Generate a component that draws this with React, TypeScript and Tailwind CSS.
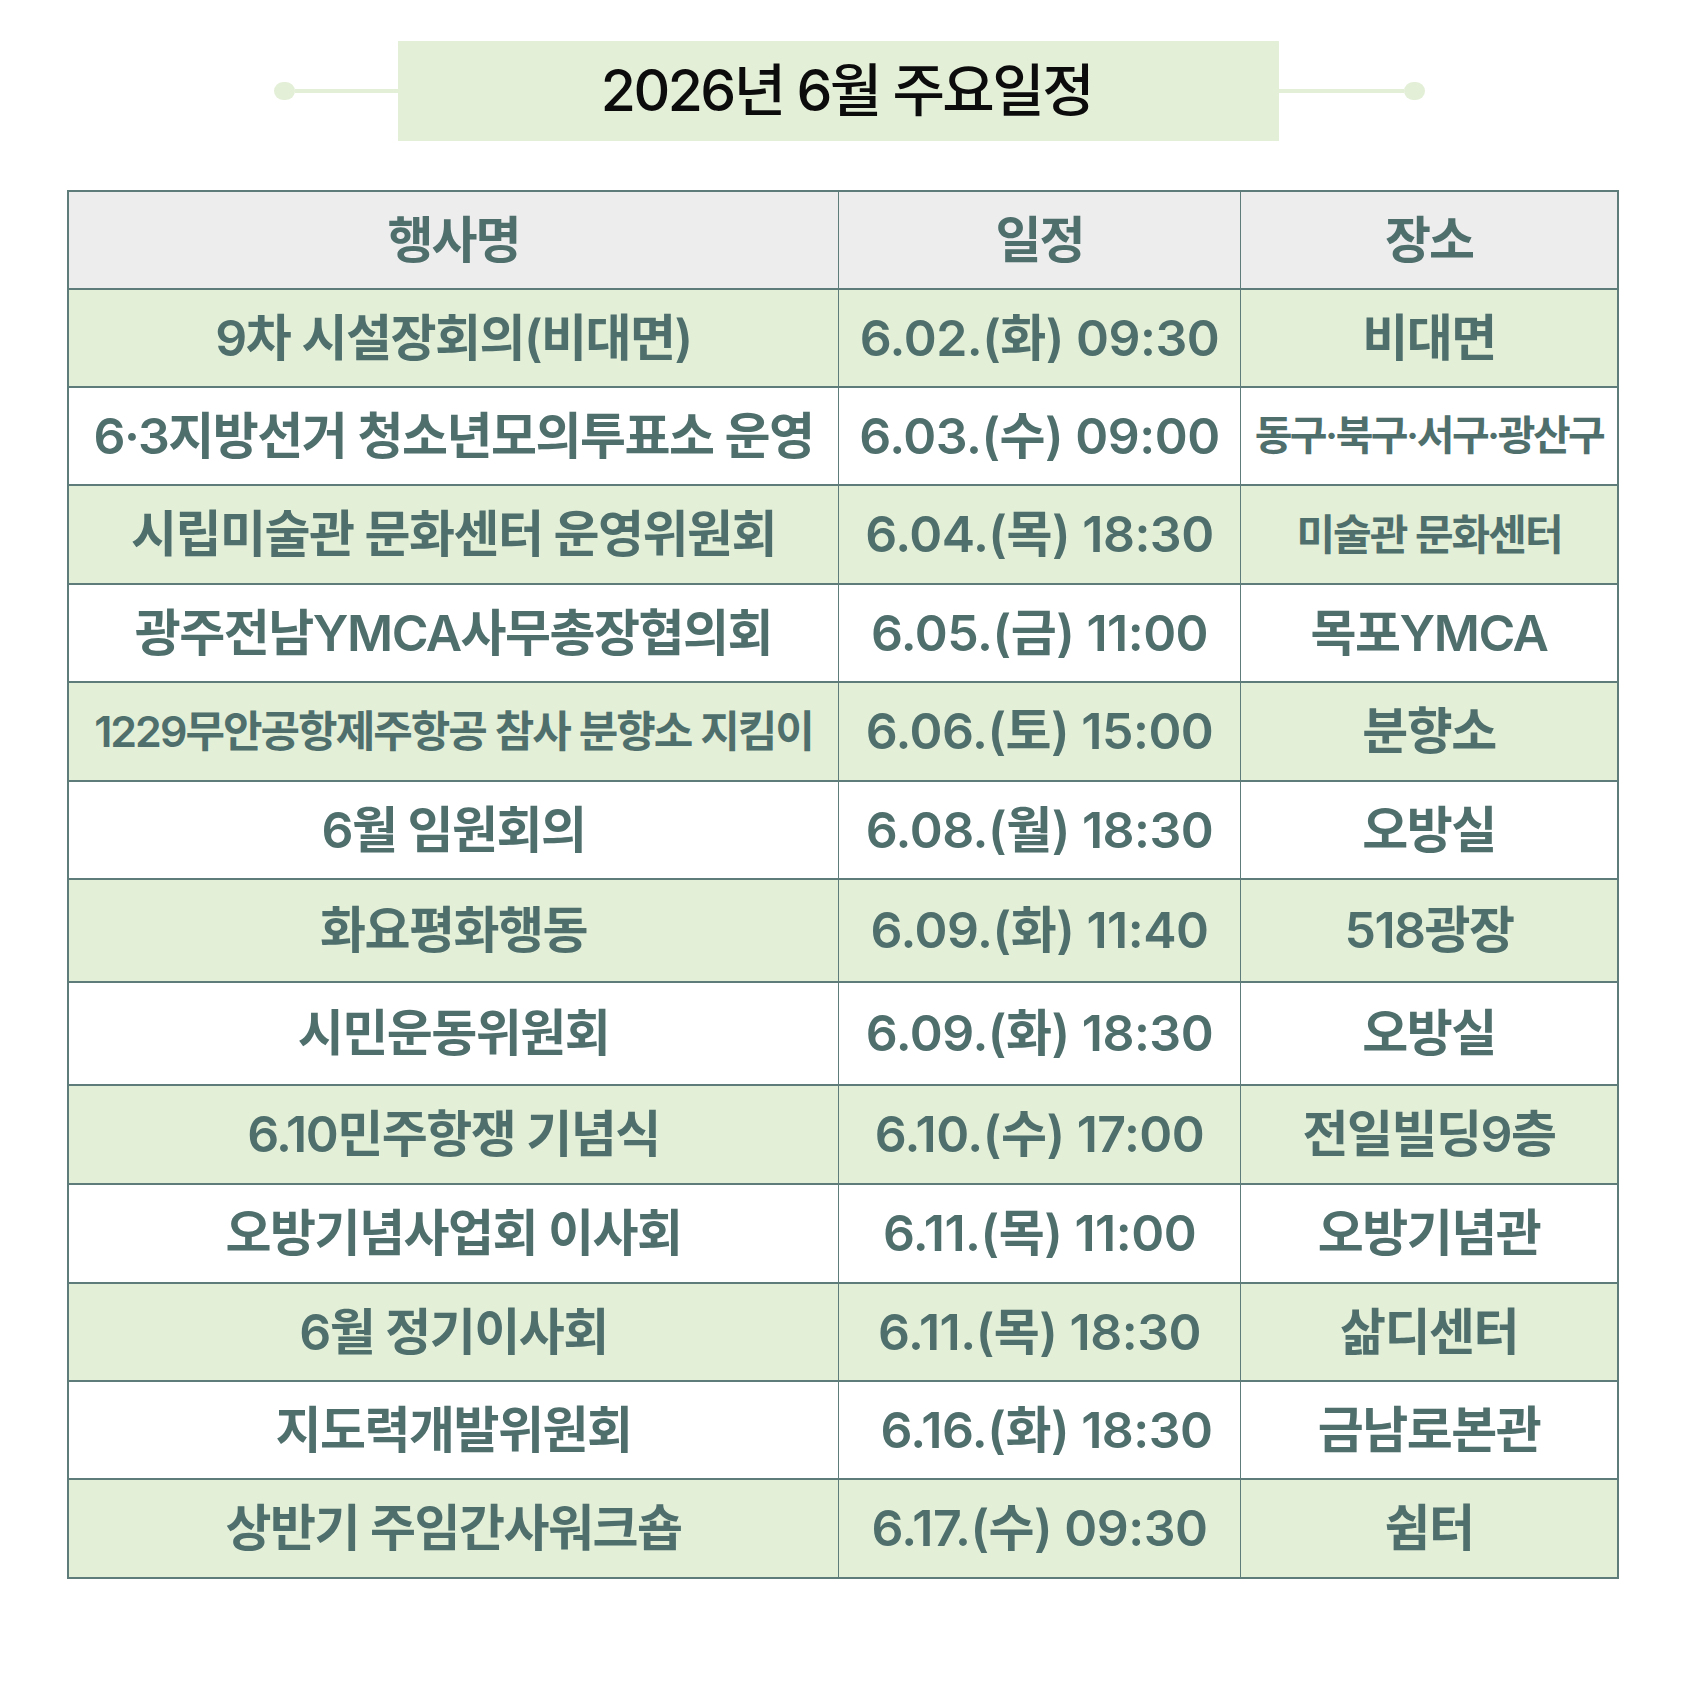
import React from "react";

type Row = {
  name: string;
  date: string;
  place: string;
  h: string;
  nameSize?: string;
  placeSize?: string;
  dateClass?: string;
};

const rows: Row[] = [
  { name: "9차 시설장회의(비대면)", date: "6.02.(화) 09:30", place: "비대면", h: "h-[98px]" },
  {
    name: "6·3지방선거 청소년모의투표소 운영",
    date: "6.03.(수) 09:00",
    place: "동구·북구·서구·광산구",
    h: "h-[98px]",
    placeSize: "text-[41px] tracking-[-2.5px]",
  },
  {
    name: "시립미술관 문화센터 운영위원회",
    date: "6.04.(목) 18:30",
    place: "미술관 문화센터",
    h: "h-[99px]",
    placeSize: "text-[42px] tracking-[-2px]",
  },
  { name: "광주전남YMCA사무총장협의회", date: "6.05.(금) 11:00", place: "목포YMCA", h: "h-[98px]" },
  {
    name: "1229무안공항제주항공 참사 분향소 지킴이",
    date: "6.06.(토) 15:00",
    place: "분향소",
    h: "h-[99px]",
    nameSize: "text-[43px] tracking-[-2px]",
  },
  { name: "6월 임원회의", date: "6.08.(월) 18:30", place: "오방실", h: "h-[98px]" },
  { name: "화요평화행동", date: "6.09.(화) 11:40", place: "518광장", h: "h-[103px]" },
  { name: "시민운동위원회", date: "6.09.(화) 18:30", place: "오방실", h: "h-[103px]" },
  { name: "6.10민주항쟁 기념식", date: "6.10.(수) 17:00", place: "전일빌딩9층", h: "h-[99px]" },
  { name: "오방기념사업회 이사회", date: "6.11.(목) 11:00", place: "오방기념관", h: "h-[99px]" },
  { name: "6월 정기이사회", date: "6.11.(목) 18:30", place: "삶디센터", h: "h-[98px]" },
  { name: "지도력개발위원회", date: "6.16.(화) 18:30", place: "금남로본관", h: "h-[98px]", dateClass: "pl-[14px]" },
  { name: "상반기 주임간사워크숍", date: "6.17.(수) 09:30", place: "쉼터", h: "h-[99px]" },
];

const font = { fontFamily: 'Inter, "Noto Sans CJK KR", sans-serif' };

function Dot() {
  return <div className="h-[18px] w-[21px] rounded-full bg-[#e4efd8]" />;
}

export default function App() {
  return (
    <div className="w-[1688px] h-[1688px] bg-white" style={font}>
      {/* Title */}
      <div className="flex items-center pl-[274px] pt-[41px]">
        <Dot />
        <div className="h-[4px] w-[103px] bg-[#e4efd8]" />
        <div className="flex h-[100px] w-[881px] items-center justify-center bg-[#e4efd8] pl-[16px]">
          <span className="text-[57px] font-medium tracking-[-2.5px] text-[#0c0c0c]">2026년 6월 주요일정</span>
        </div>
        <div className="h-[4px] w-[125px] bg-[#e4efd8]" />
        <Dot />
      </div>

      {/* Table */}
      <div className="ml-[67px] mt-[49px] w-[1552px] border-2 border-[#5e7c7a] text-[#4f6f6d]">
        <div className="grid h-[96px] grid-cols-[769px_402px_1fr] bg-[#ededed] text-[50px] font-bold tracking-[-2px]">
          <div className="flex items-center justify-center">행사명</div>
          <div className="flex items-center justify-center border-l border-[#5e7c7a]">일정</div>
          <div className="flex items-center justify-center border-l border-[#5e7c7a]">장소</div>
        </div>
        {rows.map((r, i) => (
          <div
            key={i}
            className={`grid grid-cols-[769px_402px_1fr] border-t-2 border-[#5e7c7a] font-semibold whitespace-nowrap ${r.h} ${
              i % 2 === 0 ? "bg-[#e4efd8]" : "bg-white"
            }`}
          >
            <div className={`flex items-center justify-center ${r.nameSize ?? "text-[50px] tracking-[-1.5px]"}`}>
              {r.name}
            </div>
            <div
              className={`flex items-center justify-center border-l border-[#5e7c7a] text-[50px] tracking-[-0.5px] ${
                r.dateClass ?? ""
              }`}
            >
              {r.date}
            </div>
            <div
              className={`flex items-center justify-center border-l border-[#5e7c7a] ${
                r.placeSize ?? "text-[50px] tracking-[-1.5px]"
              }`}
            >
              {r.place}
            </div>
          </div>
        ))}
      </div>
    </div>
  );
}
